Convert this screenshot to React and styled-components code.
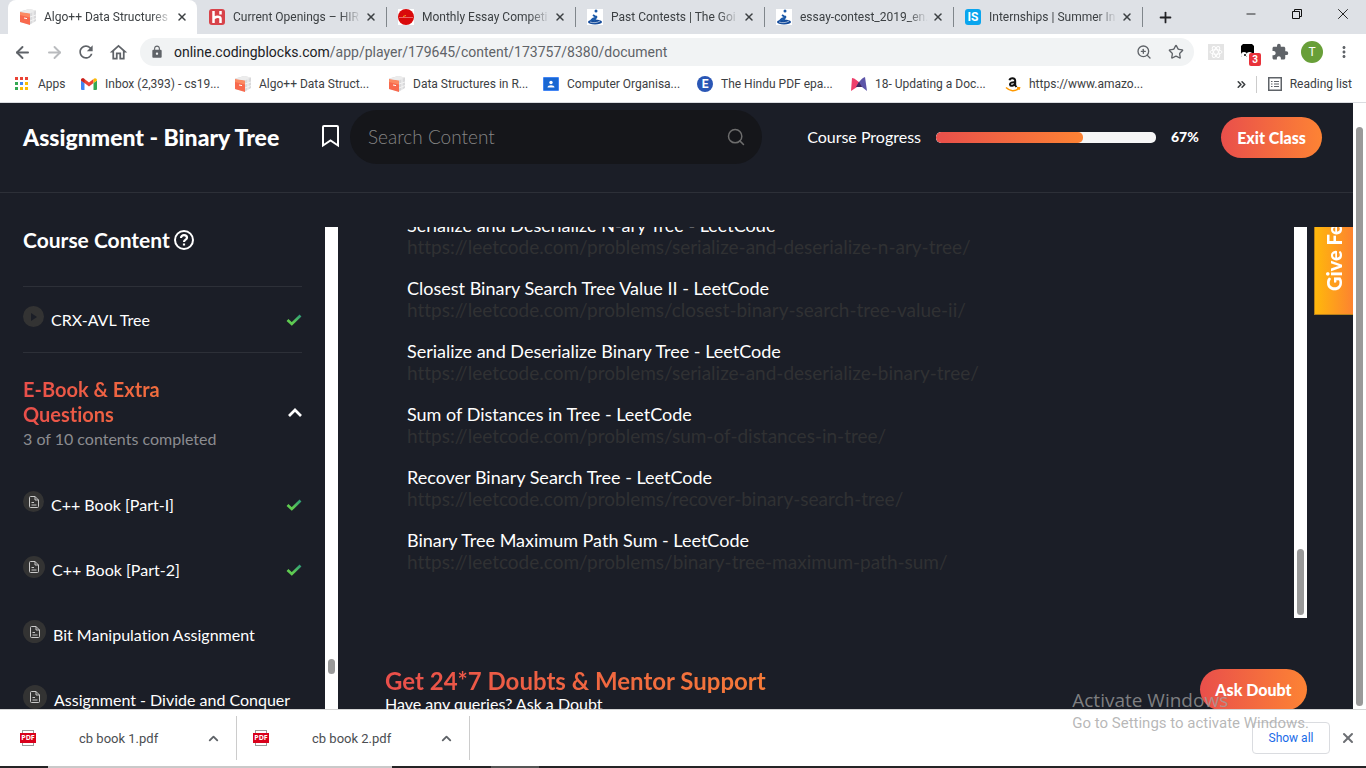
import React from "react";
import styled, { createGlobalStyle } from "styled-components";
import {
  ArrowLeft, ArrowRight, ChevronUp, Search, Star, X, Plus, ZoomIn, Minus, ChevronsRight,
} from "lucide-react";
import { MdLock, MdRefresh, MdExtension, MdMoreVert, MdOutlineHome } from "react-icons/md";

const uiFont = `Roboto, "Open Sans", sans-serif`;
const systemFont = `"Open Sans", "Noto Sans", sans-serif`;
const appFont = `Lato, "Open Sans", sans-serif`;
const warm = "linear-gradient(90deg, #e94f4b, #fd8334)";

const GlobalStyle = createGlobalStyle`
  *, *::before, *::after { box-sizing: border-box; }
  body { margin: 0; font-family: ${uiFont}; font-size: 12px; color: #3c4043; }
  button { border: 0; padding: 0; background: none; font: inherit; color: inherit; cursor: pointer; }
  a { color: inherit; text-decoration: none; }
  h1, h2, h3, p, ul { margin: 0; padding: 0; }
  ul { list-style: none; }
  svg { display: block; flex: none; }
`;

const Window = styled.div`
  display: flex;
  flex-direction: column;
  height: 100vh;
  overflow: hidden;
  background: #fff;
`;

/* Browser frame */
const TabStrip = styled.div`
  display: flex;
  flex: none;
  height: 34px;
  padding-left: 8px;
  background: #dee1e6;
`;
const Tab = styled.div`
  display: flex;
  align-items: center;
  width: 189px;
  padding: 0 9px 0 12px;
  border-radius: 8px 8px 0 0;
  background: ${(p) => (p.$active ? "#fff" : "transparent")};
`;
const TabTitle = styled.span`
  flex: 1;
  min-width: 0;
  margin: 0 4px 0 8px;
  overflow: hidden;
  white-space: nowrap;
  line-height: 20px;
  mask-image: linear-gradient(90deg, #000 84%, transparent);
`;
const TabDivider = styled.span`
  flex: none;
  width: 1px;
  height: 20px;
  margin: 7px -1px 0 0;
  background: #80868b;
`;
const NewTab = styled.button`
  display: flex;
  align-items: center;
  margin-left: 15px;
  color: #202124;
`;
const WindowButtons = styled.div`
  display: flex;
  height: 28px;
  margin-left: auto;
  color: #111;
`;
const WindowButton = styled.button`
  display: flex;
  align-items: center;
  justify-content: center;
  width: 46px;
`;
const Toolbar = styled.div`
  display: flex;
  align-items: center;
  flex: none;
  height: 36px;
  padding: 0 6px;
  color: #5f6368;
`;
const ToolButton = styled.button`
  display: flex;
  align-items: center;
  justify-content: center;
  flex: none;
  width: 32px;
  height: 28px;
`;
const AddressBar = styled.div`
  display: flex;
  align-items: center;
  flex: 1;
  height: 28px;
  margin: 0 6px;
  padding: 0 10px;
  border-radius: 14px;
  background: #f1f3f4;
`;
const Url = styled.span`
  flex: 1;
  margin-left: 10px;
  font-size: 14px;
  line-height: 20px;
  b { font-weight: 400; color: #202124; }
`;
const AddressIcons = styled.div`
  display: flex;
  gap: 16px;
`;
const BadgeHolder = styled.span`
  position: relative;
  width: 16px;
  height: 16px;
`;
const Badge = styled.span`
  position: absolute;
  left: 9px;
  top: 9px;
  width: 12px;
  height: 13px;
  border-radius: 2px;
  background: #e8323a;
  color: #fff;
  font-size: 10px;
  font-weight: 700;
  line-height: 13px;
  text-align: center;
`;
const Avatar = styled.span`
  width: 22px;
  height: 22px;
  border-radius: 50%;
  background: #689f38;
  color: #fff;
  line-height: 22px;
`;
const BookmarkBar = styled.nav`
  display: flex;
  align-items: center;
  flex: none;
  height: 33px;
  padding: 0 14px 4px;
  border-bottom: 1px solid #dadce0;
`;
const BookmarkLink = styled.a`
  display: flex;
  align-items: center;
  gap: 8px;
  flex: 0 1 ${(p) => p.$width || 154}px;
  white-space: nowrap;
  line-height: 18px;
`;
const ReadingList = styled.div`
  display: flex;
  align-items: center;
  gap: 8px;
  margin-left: auto;
  white-space: nowrap;
`;
const ThinLine = styled.span`
  width: 1px;
  height: 17px;
  margin: 0 3px 0 0;
  background: #ccc;
`;

/* Course player */
const Viewport = styled.div`
  display: flex;
  flex: 1;
  min-height: 0;
  font-family: ${appFont};
  font-variant-ligatures: none;
`;
const Page = styled.div`
  display: flex;
  flex-direction: column;
  flex: 1;
  min-width: 0;
  background: #1b1e27;
  color: #fff;
`;
const Track = styled.div`
  display: flex;
  flex-direction: column;
  justify-content: flex-end;
  flex: none;
  width: 13px;
  padding: 0 3px ${(p) => p.$below}px;
  background: #fff;
`;
const Thumb = styled.div`
  height: ${(p) => p.$size};
  border-radius: 4px;
  background: #999;
`;
const Header = styled.header`
  display: flex;
  align-items: center;
  flex: none;
  height: 90px;
  padding: 7px 31px 28px 23px;
  border-bottom: 1px solid #2d3038;
`;
const PageTitle = styled.h1`
  width: 298px;
  font-size: 23px;
  line-height: 28px;
  font-weight: 900;
`;
const SearchBox = styled.label`
  display: flex;
  align-items: center;
  flex: 0 1 412px;
  height: 54px;
  margin-left: 10px;
  padding: 0 16px 0 18px;
  border-radius: 27px;
  background: #15161a;
  color: #6d6d6d;
`;
const SearchInput = styled.input`
  flex: 1;
  min-width: 0;
  padding: 0;
  border: 0;
  outline: 0;
  background: none;
  color: #ddd;
  font: 300 19px/24px ${appFont};
  &::placeholder { color: #858585; opacity: 1; }
`;
const Progress = styled.div`
  display: flex;
  align-items: center;
  gap: 15px;
  margin: 0 23px 0 auto;
  font-size: 16px;
  line-height: 20px;
  white-space: nowrap;
  b { width: 27px; font-weight: 900; font-size: 14px; }
`;
const ProgressTrack = styled.div`
  width: 220px;
  height: 11px;
  border-radius: 5px;
  overflow: hidden;
  background: #f6f6f6;
`;
const ProgressFill = styled.div`
  height: 100%;
  border-radius: 5px;
  background: ${warm};
`;
const Pill = styled.button`
  flex: none;
  width: ${(p) => p.$width}px;
  height: 41px;
  border-radius: 21px;
  background: ${warm};
  color: #fff;
  font-size: 16px;
  font-weight: 900;
`;
const Body = styled.div`
  display: flex;
  flex: 1;
  min-height: 0;
  padding-top: 34px;
`;
const Sidebar = styled.aside`
  display: flex;
  flex: none;
  width: 338px;
`;
const SidebarContent = styled.div`
  flex: 1;
  min-width: 0;
  padding: 0 23px;
  overflow: hidden;
`;
const SidebarTitle = styled.h2`
  display: flex;
  align-items: center;
  gap: 4px;
  height: 60px;
  padding-bottom: 34px;
  border-bottom: 1px solid #2d3038;
  font-size: 21px;
  line-height: 26px;
  font-weight: 700;
`;
const Lesson = styled.li`
  display: flex;
  align-items: center;
  gap: 7px;
  height: ${(p) => (p.$ruled ? 66 : 65)}px;
  border-bottom: ${(p) => (p.$ruled ? "1px solid #2d3038" : "0")};
`;
const LessonIcon = styled.span`
  display: flex;
  align-items: center;
  justify-content: center;
  flex: none;
  width: ${(p) => p.$size}px;
  height: ${(p) => p.$size}px;
  margin-bottom: 6px;
  border-radius: 50%;
  background: #333;
`;
const LessonLink = styled.a`
  flex: 1;
  white-space: nowrap;
  font-size: 16px;
  line-height: 20px;
`;
const Chapter = styled.div`
  display: flex;
  align-items: center;
  justify-content: space-between;
  padding: 24px 0 21px;
`;
const ChapterTitle = styled.h3`
  width: 190px;
  font-size: 20px;
  line-height: 25px;
  font-weight: 700;
  color: transparent;
  background: linear-gradient(90deg, #e94f4b, #f57a38);
  background-clip: text;
`;
const ChapterNote = styled.p`
  font-size: 16px;
  line-height: 24px;
  color: #8b8c90;
`;
const CollapseButton = styled.button`
  padding-bottom: 4px;
`;
const Main = styled.main`
  display: flex;
  flex-direction: column;
  flex: 1;
  min-width: 0;
  padding: 0 7px 0 47px;
`;
const DocFrame = styled.div`
  display: flex;
  flex: 1 1 391px;
  min-height: 0;
`;
const DocList = styled.ul`
  display: flex;
  flex-direction: column;
  justify-content: flex-end;
  gap: 21px;
  flex: 1;
  overflow: hidden;
  padding: 0 22px 46px;
  font-size: 18px;
  line-height: 21px;
`;
const DocLink = styled.a`
  display: block;
  color: #303133;
  font-size: 19px;
`;
const Support = styled.section`
  display: flex;
  justify-content: space-between;
  flex: none;
  height: 91px;
  padding-top: 51px;
`;
const SupportTitle = styled.h2`
  font-size: 24px;
  line-height: 24px;
  color: transparent;
  background: linear-gradient(90deg, #e94f4b, #f57a38);
  background-clip: text;
`;
const SupportNote = styled.p`
  font-size: 16px;
  line-height: 22px;
`;
const Feedback = styled.button`
  display: flex;
  flex: none;
  width: 39px;
  height: 88px;
  overflow: hidden;
  padding-top: 23px;
  border: 1px solid #b7801c;
  border-width: 1px 1px 0 0;
  background: linear-gradient(270deg, #ffb80b, #fd8330);
  color: #fff;
  font-size: 20px;
  font-weight: 900;
  line-height: 38px;
  white-space: nowrap;
  writing-mode: vertical-rl;
  transform: rotate(180deg);
`;

/* Downloads and desktop */
const Downloads = styled.footer`
  position: relative;
  display: flex;
  align-items: center;
  flex: none;
  height: 57px;
  padding: 0 10px 0 4px;
  border-top: 1px solid #d5d5d5;
  background: #fff;
`;
const Download = styled.button`
  display: flex;
  align-items: center;
  width: 233px;
  height: 44px;
  padding: 0 15px 0 16px;
  border-right: 1px solid #ccc;
  font-size: 13px;
  text-align: left;
  color: #5f6368;
  span { flex: 1; margin-left: 43px; color: #4a4d51; }
`;
const PdfIcon = styled.i`
  display: flex;
  align-items: center;
  flex: none;
  width: 16px;
  height: 16px;
  background: linear-gradient(#999, #999) center top / 12px 1px no-repeat,
    linear-gradient(#999, #999) center bottom / 12px 1px no-repeat,
    linear-gradient(#999, #999) 2px 0 / 1px 16px no-repeat,
    linear-gradient(#999, #999) 13px 0 / 1px 16px no-repeat;
  b {
    width: 16px;
    height: 10px;
    background: #d9001b;
    color: #fff;
    font: 700 7px/10px ${systemFont};
    text-align: center;
  }
`;
const ShowAll = styled.button`
  width: 78px;
  height: 32px;
  margin: 0 10px 0 auto;
  border: 1px solid #dadce0;
  border-radius: 4px;
  color: #1a6be8;
`;
const Watermark = styled.div`
  position: absolute;
  right: 57px;
  bottom: 33px;
  color: rgba(160, 160, 160, 0.75);
  font: 400 15px/20px ${uiFont};
  white-space: nowrap;
  pointer-events: none;
  strong { display: block; font: 400 19px/26px ${systemFont}; }
`;
const Taskbar = styled.div`
  display: flex;
  flex: none;
  height: 2px;
  background: #252426;
`;
const TaskSegment = styled.span`
  width: ${(p) => p.$width}px;
  background: ${(p) => p.$color};
`;

const Cube = () => (
  <svg width="16" height="16" viewBox="0 0 16 16">
    <path d="M0 2.500 9 0l7 1.500V12l-6 3.500L0 13z" fill="#d9d9db" />
    <path d="M0 3l10 1.500v11.500L0 13z" fill="#f8694d" />
    <path d="M0 3l10 1.500v4L0 6z" fill="#fb8a63" />
    <path d="M0 3 9 0l7 1.500-6 3z" fill="#ececec" />
    <path d="M10 8l6-2M10 12l6-2.500M13 3v11" stroke="#f3f3f3" />
    <path d="M4 9l3 .6" stroke="#fff" />
  </svg>
);
const HirFavicon = () => (
  <svg width="16" height="16" viewBox="0 0 16 16">
    <rect width="16" height="16" rx="3" fill="#d8434a" />
    <path d="M4.500 2v12M11.500 2v3.500M4.500 10c1.500-3 7-3 7-.5V14" fill="none" stroke="#fff" strokeWidth="2.500" />
  </svg>
);
const EssayFavicon = () => (
  <svg width="16" height="16" viewBox="0 0 16 16">
    <rect width="16" height="16" fill="#fff" />
    <circle cx="8" cy="8" r="8" fill="#d9090b" />
    <path d="M1 8.500h14" stroke="#f08080" strokeWidth=".8" />
    <path d="M5 7.500l3-1" stroke="#f9a11b" />
  </svg>
);
const GoiFavicon = () => (
  <svg width="16" height="16" viewBox="0 0 16 16">
    <rect width="16" height="16" fill="#fff" />
    <ellipse cx="8" cy="13" rx="7" ry="2.500" fill="#134a9a" />
    <path d="M4 12c1-4 7-2 5-5M6 6l3 2-2 4" fill="none" stroke="#1b59a8" strokeWidth="2" />
    <circle cx="9" cy="2" r="1.500" fill="#1b59a8" />
    <path d="M3 13c3 1 7 1 10-1" fill="none" stroke="#fff" strokeWidth=".6" />
  </svg>
);
const Tile = styled.span`
  flex: none;
  width: 16px;
  height: 16px;
  border-radius: ${(p) => p.$radius};
  background: ${(p) => p.$color};
  color: #fff;
  font-size: 12px;
  font-weight: 700;
  line-height: 16px;
  text-align: center;
`;
const AppsIcon = () => (
  <svg width="16" height="14" viewBox="-1 0 16 14">
    {["#ea4335", "#ea4335", "#ea4335", "#34a853", "#4285f4", "#fbbc04", "#34a853", "#fbbc04", "#fbbc04"].map((c, i) => (
      <rect key={i} x={(i % 3) * 5} y={Math.floor(i / 3) * 5} width="3" height="3" fill={c} />
    ))}
  </svg>
);
const GmailIcon = () => (
  <svg width="16" height="12" viewBox="0 0 16 12">
    <path d="M1 12h2.500V5L0 2.500V11a1 1 0 0 0 1 1z" fill="#4285f4" />
    <path d="M12.500 12H15a1 1 0 0 0 1-1V2.500L12.500 5z" fill="#34a853" />
    <path d="M0 2.500C0 .5 2-.3 3.500 1L8 4.500 12.500 1v4L8 8.500 3.500 5v0z" fill="#ea4335" />
    <path d="M0 2.500 3.500 5V1C2-.3 0 .5 0 2.500z" fill="#c5221f" />
    <path d="M12.500 5V1c1.500-1.300 3.500-.5 3.500 1.500z" fill="#fbbc04" />
  </svg>
);
const ClassroomIcon = () => (
  <svg width="16" height="14" viewBox="0 0 16 14">
    <rect width="16" height="14" rx="1" fill="#4285f4" />
    <rect x="1" y="1" width="14" height="12" fill="#1967d2" />
    <circle cx="8" cy="5.500" r="1.700" fill="#fff" />
    <path d="M4.500 10.500c0-3 7-3 7 0z" fill="#fff" />
  </svg>
);
const MIcon = () => (
  <svg width="16" height="14" viewBox="0 0 16 14">
    <path d="M0 14 1 1c3 0 5 3 7 4l3 5H6z" fill="#ee3f6b" />
    <path d="M16 14 14 0C11 1 9 4 8 5l-3 5h6z" fill="#5d55a8" />
    <path d="M8 5l3 5H5z" fill="#41285f" />
  </svg>
);
const AmazonIcon = () => (
  <svg width="16" height="16" viewBox="0 0 16 16">
    <path d="M4.500 4.200C5 2 10.200 1.200 10.200 4.800V10M10 6.300C7 6 4.800 6.800 5 8.500c.3 2 4 1.800 5-.9M10 9l1.500 2" fill="none" stroke="#111" strokeWidth="2" />
    <path d="M1 11.500c4 4 9 4 12.500 1.200M12 11.700h2.500l-.6 2" fill="none" stroke="#f90" strokeWidth="1.500" />
  </svg>
);
const ListIcon = () => (
  <svg width="14" height="14" viewBox="0 0 14 14" fill="none" stroke="#5f6368">
    <rect x=".75" y=".75" width="12.500" height="12.500" strokeWidth="1.500" />
    <path d="M3 4.500h1.500M3 7h1.500M3 9.500h1.500M6 4.500h5M6 7h5M6 9.500h5" />
  </svg>
);
const ReactExtension = () => (
  <svg width="16" height="16" viewBox="0 0 16 16">
    <rect width="16" height="16" fill="#e4e4e4" />
    <g fill="none" stroke="#fff">
      <ellipse cx="8" cy="8" rx="6" ry="2.300" />
      <ellipse cx="8" cy="8" rx="6" ry="2.300" transform="rotate(60 8 8)" />
      <ellipse cx="8" cy="8" rx="6" ry="2.300" transform="rotate(120 8 8)" />
    </g>
  </svg>
);
const MonkeyExtension = () => (
  <svg width="16" height="16" viewBox="0 0 16 16">
    <path d="M3 0h9l2 2v11H2L1 12V2z" fill="#000" />
    <circle cx="4" cy="11" r="3" fill="#fff" />
    <circle cx="9.500" cy="11" r="3" fill="#fff" />
    <circle cx="5" cy="11" r="1" fill="#000" />
  </svg>
);
const RestoreIcon = () => (
  <svg width="10" height="10" viewBox="0 0 10 10" fill="none" stroke="#111">
    <path d="M.5 2.500h7v7h-7zM2.500 2.500v-2h7v7h-2" />
  </svg>
);
const TickIcon = () => (
  <svg width="16" height="12" viewBox="0 0 16 12">
    <defs>
      <linearGradient id="tick" x1="0" x2="1" y1="1" y2="0">
        <stop offset=".3" stopColor="#5fcb50" />
        <stop offset="1" stopColor="#2f9e78" />
      </linearGradient>
    </defs>
    <path d="M1.500 6 5.800 10 14.500 1.500" fill="none" stroke="url(#tick)" strokeWidth="2.700" />
  </svg>
);
const PageIcon = () => (
  <svg width="10" height="12" viewBox="0 0 10 12" fill="none" stroke="#c9c9c9">
    <path d="M1.500.5h4.500L9.500 4v6.500a1 1 0 0 1-1 1h-7a1 1 0 0 1-1-1v-9a1 1 0 0 1 1-1zM6 .5V4h3.500M2.500 6.500H5M2.500 9h5" />
  </svg>
);
const PlayIcon = () => (
  <svg width="6" height="8" viewBox="0 0 6 8"><path d="M0 0l6 4-6 4z" fill="#1b1e27" /></svg>
);
const HelpIcon = () => (
  <svg width="20" height="20" viewBox="0 0 20 20" fill="none" stroke="#fff" strokeWidth="2">
    <circle cx="10" cy="10" r="9" />
    <path d="M7 8c0-4 6-3.500 6-.3C13 9.800 10 9.500 10 12M10 13.500v2" strokeWidth="2.200" />
  </svg>
);
const BookmarkIcon = () => (
  <svg width="19" height="24" viewBox="0 0 19 24" fill="none" stroke="#fff" strokeWidth="2">
    <path d="M2 2a1 1 0 0 1 1-1h13a1 1 0 0 1 1 1v18.500l-7.500-5-7.500 5z" />
  </svg>
);

const tabs = [
  ["Algo++ Data Structures", <Cube />],
  ["Current Openings – HIR", <HirFavicon />],
  ["Monthly Essay Competi", <EssayFavicon />],
  ["Past Contests | The Goi", <GoiFavicon />],
  ["essay-contest_2019_en.", <GoiFavicon />],
  ["Internships | Summer In", <Tile $radius="3px" $color="#0aa5ee">IS</Tile>],
];
const bookmarks = [
  ["Inbox (2,393) - cs19...", <GmailIcon />],
  ["Algo++ Data Struct...", <Cube />],
  ["Data Structures in R...", <Cube />],
  ["Computer Organisa...", <ClassroomIcon />],
  ["The Hindu PDF epa...", <Tile $radius="50%" $color="#2a56b5">E</Tile>],
  ["18- Updating a Doc...", <MIcon />],
  ["https://www.amazo...", <AmazonIcon />],
];
const lessons = [
  { name: "C++ Book [Part-I]", size: 21, done: true },
  { name: "C++ Book [Part-2]", size: 22, done: true },
  { name: "Bit Manipulation Assignment", size: 23 },
  { name: "Assignment - Divide and Conquer", size: 24 },
];
const problems = [
  ["Serialize and Deserialize N-ary Tree - LeetCode", "serialize-and-deserialize-n-ary-tree"],
  ["Closest Binary Search Tree Value II - LeetCode", "closest-binary-search-tree-value-ii"],
  ["Serialize and Deserialize Binary Tree - LeetCode", "serialize-and-deserialize-binary-tree"],
  ["Sum of Distances in Tree - LeetCode", "sum-of-distances-in-tree"],
  ["Recover Binary Search Tree - LeetCode", "recover-binary-search-tree"],
  ["Binary Tree Maximum Path Sum - LeetCode", "binary-tree-maximum-path-sum"],
];

export default function App() {
  const progress = 67;
  return (
    <Window>
      <GlobalStyle />
      <TabStrip>
        {tabs.map(([title, icon], i) => (
          <React.Fragment key={title}>
            <Tab $active={i === 0}>
              {icon}
              <TabTitle>{title}</TabTitle>
              <button aria-label="Close tab"><X size={12} strokeWidth={3} /></button>
            </Tab>
            {i > 0 && <TabDivider />}
          </React.Fragment>
        ))}
        <NewTab aria-label="New tab"><Plus size={17} strokeWidth={2.5} /></NewTab>
        <WindowButtons>
          <WindowButton aria-label="Minimize"><Minus size={14} strokeWidth={1.5} /></WindowButton>
          <WindowButton aria-label="Restore"><RestoreIcon /></WindowButton>
          <WindowButton aria-label="Close"><X size={18} strokeWidth={1.2} /></WindowButton>
        </WindowButtons>
      </TabStrip>
      <Toolbar>
        <ToolButton aria-label="Back"><ArrowLeft size={19} strokeWidth={2.4} /></ToolButton>
        <ToolButton aria-label="Forward"><ArrowRight size={19} strokeWidth={2.4} color="#b9bbbe" /></ToolButton>
        <ToolButton aria-label="Reload"><MdRefresh size={20} /></ToolButton>
        <ToolButton aria-label="Home"><MdOutlineHome size={21} /></ToolButton>
        <AddressBar>
          <MdLock size={14} />
          <Url><b>online.codingblocks.com</b>/app/player/179645/content/173757/8380/document</Url>
          <AddressIcons>
            <ZoomIn size={16} />
            <Star size={16} />
          </AddressIcons>
        </AddressBar>
        <ToolButton aria-label="React developer tools"><ReactExtension /></ToolButton>
        <ToolButton><BadgeHolder><MonkeyExtension /><Badge>3</Badge></BadgeHolder></ToolButton>
        <ToolButton aria-label="Extensions"><MdExtension size={18} /></ToolButton>
        <ToolButton><Avatar>T</Avatar></ToolButton>
        <ToolButton aria-label="Menu"><MdMoreVert size={18} /></ToolButton>
      </Toolbar>
      <BookmarkBar>
        <BookmarkLink href="#apps" $width={67}><AppsIcon />Apps</BookmarkLink>
        {bookmarks.map(([name, icon]) => (
          <BookmarkLink key={name} href="#bookmark">{icon}{name}</BookmarkLink>
        ))}
        <ReadingList>
          <ChevronsRight size={13} strokeWidth={3} />
          <ThinLine />
          <ListIcon />
          Reading list
        </ReadingList>
      </BookmarkBar>

      <Viewport>
        <Page>
          <Header>
            <PageTitle>Assignment - Binary Tree</PageTitle>
            <button aria-label="Bookmark"><BookmarkIcon /></button>
            <SearchBox>
              <SearchInput type="text" placeholder="Search Content" aria-label="Search Content" />
              <Search size={20} strokeWidth={1.8} />
            </SearchBox>
            <Progress>
              <span>Course Progress</span>
              <ProgressTrack><ProgressFill style={{ width: `${progress}%` }} /></ProgressTrack>
              <b>{progress}%</b>
            </Progress>
            <Pill $width={101}>Exit Class</Pill>
          </Header>
          <Body>
            <Sidebar>
              <SidebarContent>
                <SidebarTitle>Course Content <HelpIcon /></SidebarTitle>
                <ul>
                  <Lesson $ruled>
                    <LessonIcon $size={21}><PlayIcon /></LessonIcon>
                    <LessonLink href="#lesson">CRX-AVL Tree</LessonLink>
                    <TickIcon />
                  </Lesson>
                </ul>
                <Chapter>
                  <div>
                    <ChapterTitle>E-Book &amp; Extra Questions</ChapterTitle>
                    <ChapterNote>3 of 10 contents completed</ChapterNote>
                  </div>
                  <CollapseButton aria-label="Collapse chapter">
                    <svg width="14" height="9" viewBox="0 0 14 9" fill="none" stroke="#fff" strokeWidth="2.700">
                      <path d="M1 8l6-6 6 6" />
                    </svg>
                  </CollapseButton>
                </Chapter>
                <ul>
                  {lessons.map((l) => (
                    <Lesson key={l.name}>
                      <LessonIcon $size={l.size}><PageIcon /></LessonIcon>
                      <LessonLink href="#lesson">{l.name}</LessonLink>
                      {l.done && <TickIcon />}
                    </Lesson>
                  ))}
                </ul>
              </SidebarContent>
              <Track $below={35}><Thumb $size="15px" /></Track>
            </Sidebar>
            <Main>
              <DocFrame>
                <DocList>
                  {problems.map(([name, slug]) => (
                    <li key={slug}>
                      {name}
                      <DocLink href="#problem">https://leetcode.com/problems/{slug}/</DocLink>
                    </li>
                  ))}
                </DocList>
                <Track $below={3}><Thumb $size="66px" /></Track>
              </DocFrame>
              <Support>
                <div>
                  <SupportTitle>Get 24*7 Doubts &amp; Mentor Support</SupportTitle>
                  <SupportNote>Have any queries? Ask a Doubt</SupportNote>
                </div>
                <Pill $width={107}>Ask Doubt</Pill>
              </Support>
            </Main>
            <Feedback>Give Feedback</Feedback>
          </Body>
        </Page>
        <Track $below={3}><Thumb $size="96%" /></Track>
      </Viewport>

      <Downloads>
        {["cb book 1.pdf", "cb book 2.pdf"].map((name) => (
          <Download key={name}>
            <PdfIcon><b>PDF</b></PdfIcon>
            <span>{name}</span>
            <ChevronUp size={15} strokeWidth={3} />
          </Download>
        ))}
        <ShowAll>Show all</ShowAll>
        <button aria-label="Close downloads"><X size={16} strokeWidth={3} color="#6b6e72" /></button>
        <Watermark><strong>Activate Windows</strong>Go to Settings to activate Windows.</Watermark>
      </Downloads>
      <Taskbar>
        <TaskSegment $width={48} $color="#252426" />
        <TaskSegment $width={344} $color="#c9c9c9" />
        <TaskSegment $width={99} $color="#252426" />
        <TaskSegment $width={48} $color="#555" />
      </Taskbar>
    </Window>
  );
}
